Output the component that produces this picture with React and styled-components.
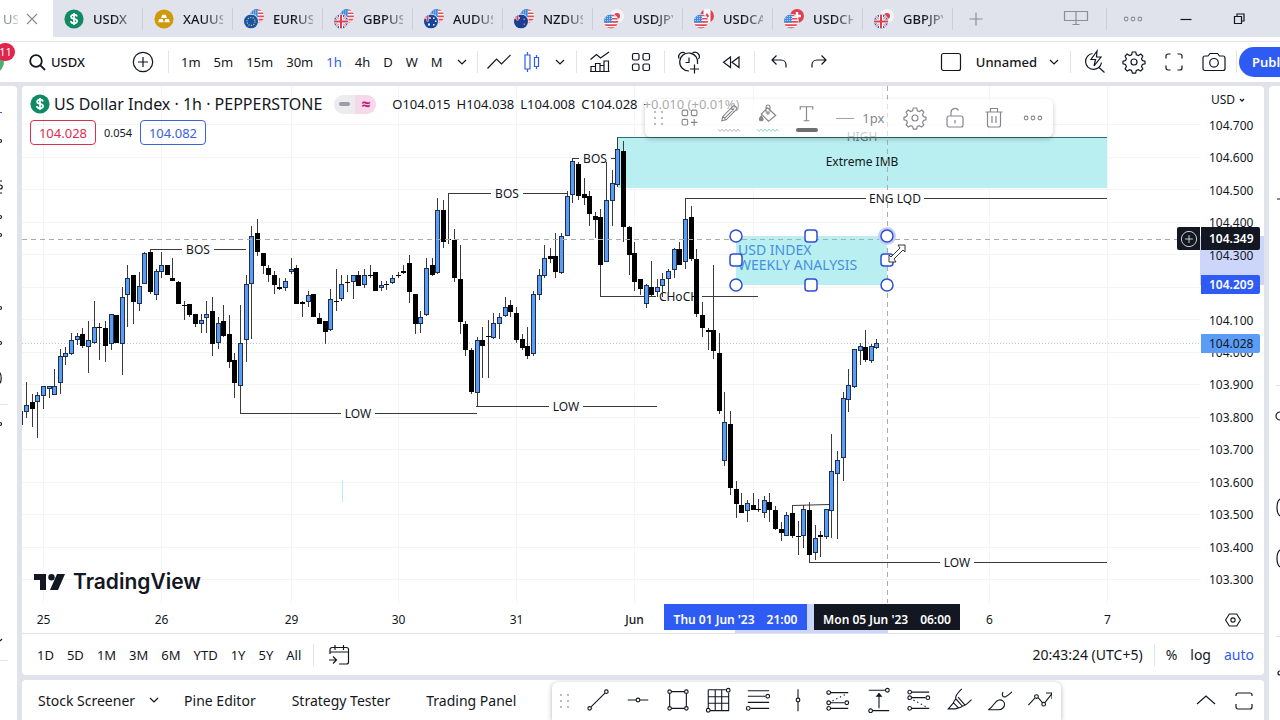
import React from 'react';
import styled, { createGlobalStyle, css } from 'styled-components';

const COLORS = {
  frame: '#e0e3eb',
  panel: '#ffffff',
  text: '#131722',
  muted: '#8b8e96',
  line: '#e0e3eb',
  grid: '#f3f4f6',
  blue: '#2f5bf5',
  up: '#5b9cf6',
  zone: '#b9eff0',
  sell: '#d9304f',
};

const FONT = '"Noto Sans", "Open Sans", sans-serif';

const GlobalStyle = createGlobalStyle`
  * { box-sizing: border-box; }
  body {
    margin: 0;
    background: ${COLORS.frame};
    color: ${COLORS.text};
    font-family: ${FONT};
    font-size: 13px;
    overflow: hidden;
  }
  button {
    border: 0;
    padding: 0;
    background: none;
    color: inherit;
    font: inherit;
    cursor: pointer;
  }
`;

// ============================================================
// FRAME
// ============================================================

const Page = styled.div`
  display: flex;
  flex-direction: column;
  height: 100vh;
`;

const Body = styled.div`
  display: flex;
  flex: 1;
  min-height: 0;
  gap: 5px;
  margin-top: 4px;
`;

const SideBar = styled.aside`
  flex: none;
  width: ${({ $width }) => $width}px;
  background: ${COLORS.panel};
  border-radius: ${({ $right }) => ($right ? '4px 0 0 0' : '0 4px 0 0')};
  overflow: hidden;

  svg { display: block; }
`;

const Center = styled.main`
  display: flex;
  flex-direction: column;
  flex: 1;
  min-width: 0;
  gap: 5px;
`;

const Divider = styled.span`
  flex: none;
  width: 1px;
  height: 22px;
  margin: 0 ${({ $gap }) => $gap || 0}px;
  background: ${({ $dark }) => ($dark ? '#cbced8' : COLORS.line)};
`;

const Spacer = styled.span`
  flex: 1;
`;

// ============================================================
// ICONS
// ============================================================

const IconSvg = styled.svg`
  display: block;
  flex: none;
  fill: none;
  stroke: currentColor;
  stroke-width: ${({ $weight }) => $weight || 1.2}px;
`;

const ICONS = {
  close: <path d="M9 9l10 10M19 9L9 19" />,
  plus: <path d="M14 7.5v13M7.5 14h13" />,
  search: <><circle cx="13" cy="13" r="5.8" /><path d="M17.2 17.2l4.800 4.800" /></>,
  addCircle: <><circle cx="14" cy="14" r="9.7" /><path d="M14 9v10M9 14h10" /></>,
  chevron: <path d="M10 12l4 4 4-4" />,
  chevronUp: <path d="M5 18l9-8 9 8" />,
  lineChart: <path d="M2.5 20.5l9-9.5 5 5 9-9" />,
  candles: <><path d="M9.5 7V4M9.5 24v-3M18.5 9V7M18.5 21v-2" /><path d="M7 7h5v14H7zM16.5 9.5h4v9h-4z" /></>,
  indicators: (
    <>
      <path d="M4.5 11.5l6-5 4 3.5 8.5-6" />
      <path d="M5 23.5v-5h4.5v5zM9.5 23.5v-8H14v8zM14 23.5v-6h4v6M18 23.5v-10.5h4.5v10.5zM4 23.5h19.5" />
    </>
  ),
  templates: (
    <>
      <rect x="5.5" y="5.5" width="6.5" height="6.5" rx="1.5" />
      <rect x="16" y="5.5" width="6.5" height="6.5" rx="1.5" />
      <rect x="5.5" y="16" width="6.5" height="6.5" rx="1.5" />
      <rect x="16" y="16" width="6.5" height="6.5" rx="1.5" />
    </>
  ),
  templatesAdd: (
    <>
      <rect x="5.5" y="5.5" width="6" height="6" rx="1.5" />
      <rect x="15.5" y="5.5" width="6" height="6" rx="1.5" />
      <rect x="5.5" y="15.5" width="6" height="6" rx="1.5" />
      <path d="M18.5 15v7.5M15 18.7h7" />
    </>
  ),
  alarm: (
    <>
      <path d="M14 23a9 9 0 1 1 8.5-7" />
      <path d="M14 9.500v5h-3.500M4 10.500a4.300 4.300 0 0 1 6-5.500M23.500 11a4.300 4.300 0 0 0-6-6M19.500 16.500v9M15 21h9" />
    </>
  ),
  rewind: <path d="M13.5 9v10.500l-7-5.200zM22 9v10.500l-7-5.200z" />,
  undo: <path d="M11.5 7.5L7 12l4.5 4.5M7.5 12H16c2.800 0 5 2.200 5 5v2.5" />,
  redo: <path d="M16.5 7.5L21 12l-4.500 4.500M20.5 12H12c-2.800 0-5 2.200-5 5v2.5" />,
  layout: <rect x="4.5" y="5.5" width="19" height="17" rx="2" />,
  quickSearch: (
    <>
      <path d="M12.5 5.5a8 8 0 1 0 9 9M18.5 19l6 5.5" />
      <path d="M17 3l-6 8.5h4.500L14 18l7-9h-4.500z" />
    </>
  ),
  gear: (
    <>
      <circle cx="14" cy="14" r="3" />
      <path d="M12.3 4h3.4l.7 2.7 2 .8L20.8 6l2 2.2-1.3 2.5.9 1.9 2.6.7v2.4l-2.6.8-.9 2 1.3 2.4-2.1 2.1-2.400-1.300-2 .8-.7 2.600h-3.200l-.8-2.600-2-.8L7.2 23l-2.100-2.100 1.300-2.400-.9-2-2.500-.8v-2.400l2.500-.7.9-1.900-1.300-2.500 2-2.200 2.500 1.500 2-.8z" />
    </>
  ),
  fullscreen: <path d="M6 10.5V8c0-1.100.9-2 2-2h2.500M17.5 6H20c1.100 0 2 .9 2 2v2.5M22 17.5V20c0 1.100-.9 2-2 2h-2.500M10.5 22H8c-1.100 0-2-.9-2-2v-2.500" />,
  maximize: <path d="M6 10V9c0-1.100.9-2 2-2h12c1.100 0 2 .9 2 2v1M22 18v3c0 1.100-.9 2-2 2H8c-1.100 0-2-.9-2-2v-3" />,
  camera: (
    <>
      <path d="M10 5.5h7.500l2 2.500H23c1.100 0 2 .9 2 2v10.500c0 1.100-.9 2-2 2H5c-1.100 0-2-.9-2-2V10c0-1.100.9-2 2-2h3z" />
      <circle cx="14" cy="14.8" r="4.3" />
    </>
  ),
  panels: <path d="M2.5 6.5h23v9h-23zM14 6.5v13M10.5 19.5h7" />,
  more: <><circle cx="6" cy="14" r="2.2" /><circle cx="14" cy="14" r="2.2" /><circle cx="22" cy="14" r="2.2" /></>,
  minimize: <path d="M8.5 14.5h11" />,
  restore: <path d="M9.5 11.5h7v7h-7zM12 11.5V9h7v7h-2.500" />,
  pencil: <path d="M6 20.5l1-4.5L17.5 5.500c.7-.7 1.800-.7 2.500 0l1 1c.7.7.7 1.800 0 2.500L10.500 19.500zM7 16l3.500 3.500M15.500 7.500L19 11M8.800 18L18.500 8.500" />,
  bucket: (
    <>
      <path d="M13 7l8.500 8-7.500 6-7.500-7.500zM11.5 12V6c0-2.500 4-2.500 4 0v5" />
      <circle cx="13.5" cy="12.5" r="1.2" />
      <path d="M6.5 15.5c-3 3.500-2 5 0 5s3-1.500 0-5z" fill="currentColor" />
    </>
  ),
  textTool: <path d="M7.5 9V6h13v3M14 6v14.500M11 20.500h6" />,
  lock: <><rect x="6" y="12" width="16" height="11" rx="2" /><path d="M10 12V8.500a4 4 0 0 1 7.500-2M14 16v3.500" /></>,
  trash: <path d="M5.5 8h17M10.5 8V4.500h7V8M7.500 8v13c0 1 .8 2 2 2h9c1.200 0 2-1 2-2V8M12 12v7M16 12v7" />,
  goTo: <path d="M5 13V8.500c0-1.100.9-2 2-2h14.500c1.100 0 2 .9 2 2V21c0 1.100-.9 2-2 2H14M5 11h18.500M10 4v5M18.500 4v5M4 19h7M8 15.500l3.500 3.500L8 22.500" />,
  hexagon: <><path d="M10 7.5h8l4 6.500-4 6.500h-8L6 14z" /><circle cx="14" cy="14" r="2.3" /></>,
  trendLine: <><path d="M6.5 21.5L21.5 6.5" /><circle cx="5" cy="23" r="1.9" /><circle cx="23" cy="5" r="1.9" /></>,
  horizontalLine: <><path d="M3 14h9M16 14h9" /><circle cx="14" cy="14" r="2" /></>,
  rectangle: (
    <>
      <path d="M7 5h14M7 23h14M5 7v14M23 7v14" />
      <circle cx="5" cy="5" r="1.9" /><circle cx="23" cy="5" r="1.9" />
      <circle cx="5" cy="23" r="1.9" /><circle cx="23" cy="23" r="1.9" />
    </>
  ),
  fibGrid: (
    <>
      <path d="M3.5 3h19M3.5 3v20M5.5 25.500h20v-19M3.5 10.500h22M3.5 17.500h22M11 3v22.500M18 3v22.500" />
      <circle cx="25" cy="3.5" r="2" /><circle cx="3.5" cy="25" r="2" />
    </>
  ),
  fib: <><path d="M3 4h23M3 10h19M3 16.5h23M6 23h20" /><circle cx="24.5" cy="10" r="2" /><circle cx="3.5" cy="23" r="2" /></>,
  verticalLine: <><path d="M14 2.5v9.500M14 16v10" /><circle cx="14" cy="14" r="2" /></>,
  longPosition: (
    <>
      <path d="M6 6h19M6 17h15M6 23h19" /><path d="M8 15L24 7" strokeDasharray="1.5 3" />
      <circle cx="4" cy="6" r="2" /><circle cx="4" cy="17" r="2" /><circle cx="4" cy="23" r="2" /><circle cx="23.5" cy="17" r="2" />
    </>
  ),
  priceRange: <><path d="M3 3.5h18M7 25.5h18M14 23V7" /><path d="M11.500 10L14 7l2.500 3z" fill="currentColor" /><circle cx="23" cy="3.5" r="2" /><circle cx="5" cy="25.5" r="2" /></>,
  shortPosition: (
    <>
      <path d="M6 5.5h19M6 11.5h15M6 23h19" /><path d="M8 14l15 8" strokeDasharray="1.5 3" />
      <circle cx="4" cy="5.5" r="2" /><circle cx="4" cy="11.5" r="2" /><circle cx="4" cy="23" r="2" /><circle cx="23.5" cy="11.5" r="2" />
    </>
  ),
  highlighter: <path d="M17 2c-4 4-7.500 7-6.500 10.500l7 8c3.500 0 6.500-3.500 10-7M11 12.500c-1.500 2-3 3-3 4.500l5.500 5.500c2 0 3-1 4.500-2M13 11l7.500 8.500M8 17l-5.500 6.500H10l3.500-1" />,
  brush: <path d="M2.5 24.500h11c4 0 6.500-3 6.500-6s-3-5-6-4.500c-5 .8-5 7-11.500 10.500zM18.500 5.500c-2 2.500-.5 6 2.500 5 2.500-.8 5-3.500 8-6" />,
  path: <><path d="M2.5 19.5l7-7.500M13 11.5l4.500 5M20.5 16.5L28 7M21.5 6.5h6.500v6.500" /><circle cx="11.3" cy="10.3" r="2" /><circle cx="19" cy="18.5" r="2" /></>,
};

const Icon = ({ name, size = 28, weight }) => (
  <IconSvg $weight={weight} width={size} height={size} viewBox="0 0 28 28" aria-hidden="true">
    {ICONS[name]}
  </IconSvg>
);

const Grip = () => (
  <svg width="10" height="14" viewBox="0 0 10 14" fill="#b9bbc1" aria-hidden="true">
    {[1, 7, 13].map((y) => (
      <React.Fragment key={y}>
        <rect x="0" y={y - 1} width="2" height="2" />
        <rect x="7" y={y - 1} width="2" height="2" />
      </React.Fragment>
    ))}
  </svg>
);

const IconButton = styled.button`
  display: flex;
  flex: none;
  align-items: center;
  justify-content: center;
  width: ${({ $width }) => $width || 40}px;
  height: 34px;
  color: ${({ $tone }) => $tone || 'inherit'};
`;

// ============================================================
// FLAGS
// ============================================================

const FLAGS = {
  us: (
    <>
      <path fill="#fff" d="M0 0h14v14H0z" />
      <path stroke="#e04b57" strokeWidth="1.6" d="M0 1h14M0 4.2h14M0 7.4h14M0 10.6h14M0 13.5h14" />
      <path fill="#3f8be0" d="M0 0h8v8H0z" />
      <path stroke="#bcdcf7" strokeWidth=".8" strokeDasharray="1 1" d="M1 2h7M1 4h7M1 6h7" />
    </>
  ),
  eu: (
    <>
      <path fill="#1656a8" d="M0 0h14v14H0z" />
      <circle cx="7" cy="7" r="4" fill="none" stroke="#d9c34a" strokeWidth="1.2" strokeDasharray="1.2 1.3" />
    </>
  ),
  gb: (
    <>
      <path fill="#3a58ae" d="M0 0h14v14H0z" />
      <path stroke="#fff" strokeWidth="2.6" d="M0 0l14 14M14 0L0 14" />
      <path stroke="#e04b57" strokeWidth="1" d="M0 0l14 14M14 0L0 14" />
      <path stroke="#fff" strokeWidth="4" d="M7 0v14M0 7h14" />
      <path stroke="#e0404e" strokeWidth="2" d="M7 0v14M0 7h14" />
    </>
  ),
  au: (
    <>
      <path fill="#17449c" d="M0 0h14v14H0z" />
      <path stroke="#fff" strokeWidth="2" d="M3.5 0v7M0 3.5h7" />
      <path stroke="#e0404e" strokeWidth="1" d="M3.5 0v7M0 3.5h7" />
      <path fill="#fff" d="M9 3h1.500v1.500H9zM11 6h1.500v1.500H11zM9 9.500h1.500V11H9zM4 9h2v2H4z" />
    </>
  ),
  nz: (
    <>
      <path fill="#1b3f94" d="M0 0h14v14H0z" />
      <path stroke="#fff" strokeWidth="2" d="M3.5 0v6M0 3.5h6" />
      <path stroke="#e0404e" strokeWidth="1" d="M3.5 0v6M0 3.5h6" />
      <path fill="#e56c78" d="M9.5 4H11v1.500H9.500zM9.500 9H11v1.500H9.500z" />
    </>
  ),
  jp: <><path fill="#f4f4f7" d="M0 0h14v14H0z" /><circle cx="7" cy="7" r="3" fill="#e0404e" /></>,
  ca: <><path fill="#fff" d="M0 0h14v14H0z" /><path fill="#e0404e" d="M0 0h3.500v14H0zM10.500 0H14v14h-3.500zM7 4l2 3-2 3-2-3z" /></>,
  ch: <><path fill="#e0404e" d="M0 0h14v14H0z" /><path stroke="#fff" strokeWidth="2.4" d="M7 3v8M3 7h8" /></>,
};

const PairIcon = ({ id, front, back }) => (
  <svg width="20" height="20" viewBox="0 0 20 20" aria-hidden="true">
    <clipPath id={`${id}-flag`}><circle cx="7" cy="7" r="7" /></clipPath>
    <g transform="translate(6 0)"><g clipPath={`url(#${id}-flag)`}>{FLAGS[back]}</g></g>
    <circle cx="7" cy="12.5" r="7.8" fill={COLORS.frame} />
    <g transform="translate(0 5.5)"><g clipPath={`url(#${id}-flag)`}>{FLAGS[front]}</g></g>
  </svg>
);

const DollarIcon = () => (
  <svg width="20" height="20" viewBox="0 0 20 20" aria-hidden="true">
    <circle cx="10" cy="10" r="9.6" fill="#0f8a62" />
    <path
      d="M13 7.500c-.3-1.200-1.500-1.800-3-1.800-1.700 0-2.900.8-2.900 2.100 0 3 6 1.400 6 4.300 0 1.400-1.300 2.200-3.100 2.200-1.700 0-3-.7-3.200-2.100M10 4v12"
      fill="none"
      stroke="#fff"
      strokeWidth="1.8"
    />
  </svg>
);

const GoldIcon = () => (
  <svg width="20" height="20" viewBox="0 0 20 20" aria-hidden="true">
    <circle cx="10" cy="10" r="9.6" fill="#cf9a0a" />
    <path fill="#fff" d="M8.200 5.800h3.600l1 3.200H7.200zM5.200 10h3.600l.8 3.200H4.200zM11.200 10h3.600l1 3.200h-5.400z" />
  </svg>
);

// ============================================================
// TAB STRIP
// ============================================================

const TabStrip = styled.nav`
  display: flex;
  flex: none;
  align-items: center;
  height: 37px;
  padding-right: 15px;
`;

const ActiveTab = styled.div`
  display: flex;
  flex: none;
  align-items: center;
  width: 53px;
  height: 37px;
  padding-left: 3px;
  background: ${COLORS.panel};
  color: ${COLORS.muted};
`;

const FadeText = styled.span`
  flex: none;
  width: ${({ $width }) => $width}px;
  overflow: hidden;
  white-space: nowrap;
  mask-image: linear-gradient(90deg, #000 50%, rgba(0, 0, 0, 0.3) 100%);
`;

const SymbolTab = styled.button`
  display: flex;
  flex: none;
  align-items: center;
  gap: 9px;
  width: 90px;
  height: 22px;
  padding-left: 11px;
  border-right: 1px solid #cbced8;
  font-weight: 500;
  text-align: left;
`;

const TABS = [
  { name: 'USDX', icon: <DollarIcon /> },
  { name: 'XAUUSD', icon: <GoldIcon /> },
  { name: 'EURUSD', front: 'eu', back: 'us' },
  { name: 'GBPUSD', front: 'gb', back: 'us' },
  { name: 'AUDUSD', front: 'au', back: 'us' },
  { name: 'NZDUSD', front: 'nz', back: 'us' },
  { name: 'USDJPY', front: 'us', back: 'jp' },
  { name: 'USDCAD', front: 'us', back: 'ca' },
  { name: 'USDCHF', front: 'us', back: 'ch' },
  { name: 'GBPJPY', front: 'gb', back: 'jp' },
];

const Tabs = () => (
  <TabStrip>
    <ActiveTab>
      <FadeText $width={15}>US</FadeText>
      <IconButton $width={28} aria-label="Close tab"><Icon name="close" /></IconButton>
    </ActiveTab>
    {TABS.map((tab) => (
      <SymbolTab key={tab.name}>
        {tab.icon || <PairIcon id={tab.name} front={tab.front} back={tab.back} />}
        <FadeText $width={40}>{tab.name}</FadeText>
      </SymbolTab>
    ))}
    <IconButton $width={46} $tone={COLORS.muted} aria-label="New tab"><Icon name="plus" /></IconButton>
    <Spacer />
    <IconButton $width={60} $tone={COLORS.muted} aria-label="Panels"><Icon name="panels" /></IconButton>
    <Divider $dark />
    <IconButton $width={52} $tone={COLORS.muted} aria-label="Menu"><Icon name="more" size={24} /></IconButton>
    <IconButton $width={54} aria-label="Minimize"><Icon name="minimize" /></IconButton>
    <IconButton $width={52} aria-label="Restore"><Icon name="restore" /></IconButton>
  </TabStrip>
);

// ============================================================
// TOP TOOLBAR
// ============================================================

const ToolStrip = styled.div`
  flex: none;
  height: 5px;
  background: ${COLORS.panel};
  border-bottom: 1px solid ${COLORS.line};
`;

const Toolbar = styled.header`
  display: flex;
  flex: none;
  align-items: center;
  height: 40px;
  background: ${COLORS.panel};
`;

const Account = styled.div`
  position: relative;
  flex: none;
  width: 23px;
  height: 40px;

  &:before {
    content: '';
    position: absolute;
    left: -24px;
    top: 5px;
    width: 28px;
    height: 28px;
    border-radius: 50%;
    background: #4caf6e;
  }
`;

const Badge = styled.span`
  position: absolute;
  left: -4px;
  top: 1px;
  width: 19px;
  height: 18px;
  border-radius: 9px;
  background: #e0244c;
  color: #fff;
  font-size: 11px;
  line-height: 18px;
  text-align: center;
`;

const SymbolSearch = styled.button`
  display: flex;
  align-items: center;
  width: 100px;
  height: 34px;
  font-weight: 500;
`;

const TextRow = styled.div`
  display: flex;
  align-items: center;
  gap: ${({ $gap }) => $gap}px;
  margin: 0 ${({ $after }) => $after || 0}px 0 ${({ $before }) => $before || 0}px;
`;

const TextButton = styled.button`
  flex: none;
  height: 28px;
  white-space: nowrap;
  ${({ $active }) => $active && css`color: ${COLORS.blue};`}
  ${({ $medium }) => $medium && css`font-weight: 500;`}
  ${({ $large }) => $large && css`font-size: 14px;`}
`;

const PublishButton = styled.button`
  flex: none;
  width: 41px;
  height: 30px;
  padding-left: 13px;
  border-radius: 15px 0 0 15px;
  background: ${COLORS.blue};
  color: #fff;
  font-weight: 600;
  text-align: left;
  white-space: nowrap;
  overflow: hidden;
`;

const INTERVALS = ['1m', '5m', '15m', '30m', '1h', '4h', 'D', 'W', 'M'];

const TopToolbar = () => (
  <Toolbar>
    <Account><Badge>11</Badge></Account>
    <SymbolSearch><Icon name="search" weight={1.8} />USDX</SymbolSearch>
    <IconButton aria-label="Compare symbol"><Icon name="addCircle" /></IconButton>
    <Divider $gap={5} />
    <TextRow $gap={13} $before={7} $after={6}>
      {INTERVALS.map((item) => (
        <TextButton key={item} $active={item === '1h'}>{item}</TextButton>
      ))}
    </TextRow>
    <IconButton $width={26} aria-label="More intervals"><Icon name="chevron" /></IconButton>
    <Divider $gap={2} />
    <IconButton $width={38} aria-label="Line"><Icon name="lineChart" /></IconButton>
    <IconButton $width={28} $tone={COLORS.blue} aria-label="Candles"><Icon name="candles" /></IconButton>
    <IconButton $width={28} aria-label="More styles"><Icon name="chevron" /></IconButton>
    <Divider $gap={2} />
    <IconButton $width={42} aria-label="Indicators"><Icon name="indicators" /></IconButton>
    <IconButton $width={40} aria-label="Templates"><Icon name="templates" /></IconButton>
    <Divider $gap={3} />
    <IconButton $width={42} aria-label="Alert"><Icon name="alarm" /></IconButton>
    <IconButton $width={42} aria-label="Replay"><Icon name="rewind" /></IconButton>
    <Divider $gap={2} />
    <IconButton $width={44} aria-label="Undo"><Icon name="undo" /></IconButton>
    <IconButton $width={36} aria-label="Redo"><Icon name="redo" /></IconButton>
    <Spacer />
    <IconButton aria-label="Layout"><Icon name="layout" /></IconButton>
    <TextRow $gap={4} $before={5}>
      <TextButton $medium>Unnamed</TextButton>
      <IconButton $width={26} aria-label="Layouts"><Icon name="chevron" /></IconButton>
    </TextRow>
    <Divider $gap={3} />
    <IconButton aria-label="Quick search"><Icon name="quickSearch" /></IconButton>
    <IconButton aria-label="Settings"><Icon name="gear" /></IconButton>
    <IconButton aria-label="Fullscreen"><Icon name="fullscreen" /></IconButton>
    <IconButton aria-label="Snapshot"><Icon name="camera" /></IconButton>
    <Divider $gap={2} />
    <PublishButton>Publish</PublishButton>
  </Toolbar>
);

// ============================================================
// CHART DATA
// ============================================================

// [high, body top, body bottom, low, kind] with kind 1 = up, 0 = down
const BARS = [
  [411, 411, 425, 425, 1], [382, 405, 412, 418, 1], [394, 402, 409, 427, 0], [392, 395, 402, 438, 1],
  [386, 386, 396, 409, 1], [386, 386, 389, 398, 1], [369, 386, 395, 395, 1], [349, 356, 383, 394, 1],
  [347, 353, 357, 365, 1], [333, 340, 354, 355, 1], [333, 336, 340, 345, 1], [328, 334, 346, 348, 0],
  [321, 340, 347, 373, 1], [301, 327, 343, 344, 1], [323, 327, 328, 360, 0], [321, 328, 346, 362, 0],
  [314, 314, 344, 350, 1], [315, 315, 343, 343, 0], [287, 297, 344, 375, 1], [265, 278, 295, 327, 1],
  [275, 275, 302, 324, 0], [272, 286, 304, 311, 1], [252, 253, 284, 284, 1], [250, 252, 292, 294, 0],
  [269, 271, 295, 300, 1], [252, 265, 272, 278, 1], [265, 265, 275, 275, 0], [258, 278, 281, 281, 0],
  [281, 282, 304, 304, 0], [301, 305, 306, 320, 0], [304, 304, 315, 317, 0], [314, 314, 324, 327, 0],
  [314, 320, 324, 333, 1], [301, 314, 318, 333, 1], [297, 311, 344, 356, 0], [317, 323, 343, 349, 1],
  [305, 321, 336, 337, 0], [315, 334, 362, 368, 0], [353, 360, 383, 398, 0], [305, 343, 386, 414, 1],
  [275, 284, 340, 362, 1], [226, 236, 284, 339, 1], [219, 233, 252, 256, 0], [253, 253, 266, 274, 0],
  [265, 268, 275, 282, 0], [271, 275, 285, 294, 0], [278, 287, 289, 290, 0], [278, 281, 288, 291, 1],
  [258, 269, 272, 274, 1], [265, 268, 304, 304, 0], [301, 302, 304, 317, 0], [291, 295, 302, 307, 1],
  [294, 294, 317, 317, 0], [313, 318, 324, 324, 0], [321, 321, 332, 344, 0], [289, 299, 330, 331, 1],
  [269, 301, 302, 311, 0], [275, 284, 299, 301, 1], [275, 282, 283, 292, 0], [275, 275, 282, 299, 1],
  [271, 275, 286, 286, 0], [269, 275, 285, 288, 1], [265, 275, 276, 278, 0], [272, 272, 291, 291, 0],
  [281, 285, 288, 291, 1], [281, 284, 285, 290, 0], [275, 278, 283, 284, 1], [272, 275, 276, 278, 0],
  [265, 271, 273, 274, 0], [255, 263, 292, 303, 0], [294, 294, 324, 334, 0], [311, 317, 324, 333, 1],
  [258, 268, 315, 316, 1], [258, 265, 275, 276, 0], [198, 210, 273, 274, 1], [200, 210, 242, 248, 0],
  [193, 239, 240, 244, 0], [229, 240, 278, 282, 0], [245, 279, 322, 334, 0], [321, 324, 350, 356, 0],
  [348, 350, 392, 394, 0], [337, 340, 393, 407, 1], [327, 340, 346, 378, 0], [320, 336, 337, 378, 0],
  [313, 323, 338, 339, 1], [313, 317, 324, 339, 1], [297, 307, 316, 317, 1], [300, 305, 312, 317, 0],
  [307, 313, 340, 343, 0], [334, 339, 348, 350, 0], [327, 346, 356, 359, 0], [291, 294, 354, 356, 1],
  [269, 275, 295, 300, 1], [245, 258, 276, 278, 1], [248, 256, 259, 263, 0], [233, 256, 272, 278, 0],
  [233, 236, 273, 274, 1], [191, 196, 236, 236, 1], [158, 161, 195, 203, 1], [162, 164, 196, 200, 0],
  [178, 194, 198, 205, 0], [191, 196, 214, 226, 0], [212, 216, 220, 238, 0], [209, 217, 265, 296, 0],
  [162, 200, 262, 262, 1], [170, 183, 201, 226, 1], [138, 149, 185, 187, 1], [141, 151, 227, 242, 0],
  [226, 227, 255, 275, 0], [242, 253, 282, 291, 0], [279, 279, 289, 295, 0], [284, 285, 304, 308, 1],
  [261, 287, 295, 297, 0], [279, 287, 292, 297, 1], [273, 279, 286, 297, 1], [269, 271, 279, 293, 1],
  [248, 249, 270, 278, 1], [242, 249, 265, 265, 0], [198, 219, 262, 269, 1], [206, 217, 259, 261, 0],
  [249, 259, 314, 317, 0], [302, 315, 328, 337, 0], [328, 330, 332, 350, 0], [265, 330, 351, 359, 0],
  [333, 353, 411, 414, 0], [392, 422, 461, 466, 1], [411, 424, 488, 495, 0], [481, 489, 504, 518, 0],
  [493, 505, 513, 513, 0], [500, 503, 511, 522, 1], [493, 505, 510, 510, 0], [499, 509, 510, 512, 0],
  [496, 500, 513, 518, 1], [493, 502, 510, 522, 0], [506, 510, 529, 530, 0], [522, 529, 533, 541, 0],
  [512, 515, 536, 536, 1], [505, 513, 536, 538, 0], [521, 536, 537, 555, 0], [505, 509, 536, 548, 1],
  [502, 510, 555, 562, 0], [525, 538, 553, 560, 1], [531, 535, 537, 557, 0], [509, 509, 537, 539, 1],
  [434, 471, 511, 538, 1], [451, 460, 474, 539, 1], [392, 398, 458, 481, 1], [369, 385, 400, 412, 1],
  [349, 349, 387, 388, 1], [343, 346, 351, 365, 1], [330, 347, 360, 362, 0], [344, 346, 361, 363, 1],
  [339, 343, 348, 349, 1],
];

const barX = (index) => Math.floor(20.9 + index * 5.632) + 0.5;

const DAYS = [
  { bar: 4, label: '25' },
  { bar: 25, label: '26' },
  { bar: 48, label: '29' },
  { bar: 67, label: '30' },
  { bar: 88, label: '31' },
  { bar: 109, label: 'Jun' },
  { bar: 130 },
  { bar: 153 },
  { bar: 172, label: '6' },
  { bar: 193, label: '7' },
];

const PRICES = Array.from({ length: 15 }, (_, i) => (104.7 - i * 0.1).toFixed(3));
const priceY = (index) => Math.round(125 + index * 32.5) - 0.5;

const LEVELS = [
  { label: 'BOS', y: 249.5, from: 150, to: 246, at: 198, gap: 16 },
  { label: 'LOW', y: 413.5, from: 240, to: 477, at: 358, gap: 17 },
  { label: 'BOS', y: 193.5, from: 448, to: 568, at: 507, gap: 16 },
  { label: 'LOW', y: 406.5, from: 476, to: 657, at: 566, gap: 17 },
  { label: 'BOS', y: 158.5, from: 572, to: 616, at: 595, gap: 16 },
  { label: 'CHoCH', y: 296.5, from: 600, to: 758, at: 679, gap: 23 },
  { label: 'ENG LQD', y: 198.5, from: 685, to: 1107, at: 895, gap: 29 },
  { label: 'LOW', y: 562.5, from: 809, to: 1107, at: 957, gap: 17 },
];

// ============================================================
// CHART PANE
// ============================================================

const ChartPanel = styled.section`
  display: flex;
  flex-direction: column;
  flex: 1;
  min-height: 0;
  background: ${COLORS.panel};
  border-radius: 4px;
  overflow: hidden;
`;

const PaneRow = styled.div`
  display: flex;
  flex: 1;
  min-height: 0;
`;

const Pane = styled.div`
  position: relative;
  flex: 1;
  min-width: 0;
`;

const Plot = styled.svg`
  display: block;
  width: 100%;
  height: 100%;
  font-family: ${FONT};
  font-size: 12px;
`;

const Candle = ({ bar, index }) => {
  const [high, top, bottom, low, up] = bar;
  const x = barX(index);
  return (
    <g>
      <path d={`M${x} ${high}V${low}`} stroke="#3a3a3a" />
      {up ? (
        <rect x={x - 2} y={top + 0.5} width="4" height={bottom - top - 1} fill={COLORS.up} stroke="#1d2f4c" />
      ) : (
        <rect x={x - 2.5} y={top} width="5" height={bottom - top} fill="#000" />
      )}
    </g>
  );
};

const Level = ({ level }) => (
  <g>
    <path
      d={`M${level.from} ${level.y}H${level.at - level.gap}M${level.at + level.gap} ${level.y}H${level.to}`}
      stroke="#3a3a3a"
    />
    <text x={level.at} y={level.y + 4} textAnchor="middle" fill={COLORS.text}>{level.label}</text>
  </g>
);

const Handle = ({ x, y, round }) => (
  <rect x={x - 6} y={y - 6} width="12" height="12" rx={round ? 6 : 3} fill="#fff" stroke="#2d4fd0" strokeWidth="1.5" />
);

const ChartPlot = () => (
  <Plot role="img" aria-label="US Dollar Index hourly candles">
    <g transform="translate(-22 -86)">
      <g stroke={COLORS.grid}>
        {PRICES.map((price, i) => <path key={price} d={`M22 ${priceY(i)}H2400`} />)}
        {DAYS.map(({ bar }) => <path key={bar} d={`M${barX(bar)} 86V1200`} />)}
      </g>
      <path d="M342.500 480v22" stroke={COLORS.zone} />
      <rect x="618" y="138" width="489" height="50" fill={COLORS.zone} />
      <path d="M617 137.500H1107" stroke="#2d6f74" />
      <text x="862" y="141" textAnchor="middle" fill="#6f7a7d">HIGH</text>
      <text x="862" y="166" textAnchor="middle" fill={COLORS.text}>Extreme IMB</text>
      <path d="M22 343.500H2400" stroke="#a9c8ee" strokeDasharray="1 2" />
      {LEVELS.map((level) => <Level key={`${level.label}${level.y}`} level={level} />)}
      <path d="M448.500 193V240M792.500 512V505.500L829 504.500" stroke="#3a3a3a" fill="none" />
      {BARS.map((bar, i) => <Candle key={i} bar={bar} index={i} />)}
      <rect x="736" y="236" width="151" height="49" fill={COLORS.zone} />
      <g fill="#4690e0" fontSize="14">
        <text x="738" y="255">USD INDEX</text>
        <text x="738" y="270">WEEKLY ANALYSIS</text>
      </g>
      <g stroke="#a9abb0" strokeDasharray="5 4">
        <path d="M22 239.500H2400" />
        <path d="M887.500 86V1200" />
      </g>
      <circle cx="887" cy="236" r="9" fill="#c5cdf8" />
      {[736, 887].map((x) => [236, 285].map((y) => <Handle key={`${x}${y}`} x={x} y={y} round />))}
      <Handle x={811} y={236} />
      <Handle x={811} y={285} />
      <Handle x={736} y={260} />
      <Handle x={887} y={260} />
      <path
        d="M889 262v-7l2 2 9-9-2-3h7v7l-2-2-9 9 2 3z"
        fill="#fff"
        stroke="#222"
        strokeWidth=".9"
      />
    </g>
  </Plot>
);

const Legend = styled.div`
  position: absolute;
  left: 8px;
  top: 8px;
  display: flex;
  flex-direction: column;
  gap: 6px;
`;

const LegendRow = styled.div`
  display: flex;
  align-items: center;
  height: ${({ $height }) => $height}px;
  white-space: nowrap;
`;

const SymbolTitle = styled.h1`
  margin: 0 12px 0 4px;
  font-size: 16px;
  font-weight: 400;
`;

const StatusPill = styled.span`
  display: flex;
  width: 42px;
  height: 19px;
  margin-right: 16px;
  border-radius: 10px;
  overflow: hidden;
  background: #ececee;
`;

const StatusPart = styled.span`
  display: flex;
  align-items: center;
  justify-content: center;
  width: 21px;
  font-weight: 700;
  ${({ $pink }) => $pink && css`
    background: #f8d9ea;
    color: #c2187a;
    font-size: 16px;
  `}

  i {
    width: 11px;
    height: 4px;
    border-radius: 2px;
    background: #9a9da6;
  }
`;

const Ohlc = styled.span`
  margin-right: 6px;
`;

const QuoteBox = styled.button`
  width: 66px;
  height: 25px;
  border: 1px solid currentColor;
  border-radius: 4px;
  color: ${({ $buy }) => ($buy ? '#3a63d8' : COLORS.sell)};
`;

const Spread = styled.span`
  width: 44px;
  font-size: 11px;
  text-align: center;
`;

const Watermark = styled.div`
  position: absolute;
  left: 12px;
  bottom: 8px;
  display: flex;
  align-items: center;
  gap: 8px;
  font-family: Inter, sans-serif;
  font-size: 21px;
  font-weight: 600;
  line-height: 26px;
`;

const FloatingBar = styled.div`
  position: absolute;
  left: 623px;
  top: 13px;
  display: flex;
  align-items: center;
  width: 408px;
  height: 38px;
  padding-left: 9px;
  border-radius: 6px;
  background: rgba(255, 255, 255, 0.62);
  box-shadow: 0 2px 5px rgba(0, 0, 0, 0.22);
  color: #85878c;

  > svg { margin-right: 6px; }
`;

const SwatchButton = styled.button`
  display: flex;
  flex-direction: column;
  align-items: center;
  width: 39px;
  height: 34px;
`;

const LineWidth = styled.button`
  display: flex;
  align-items: center;
  gap: 8px;
  width: 69px;
  padding-left: 10px;

  &:before {
    content: '';
    width: 18px;
    height: 1px;
    background: #a0a2a6;
  }
`;

const Wave = ({ color }) => (
  <svg width="22" height="5" viewBox="0 0 22 5" fill="none" stroke={color} aria-hidden="true">
    <path d="M0 1l2 2.5 2-2.5 2 2.5 2-2.5 2 2.5 2-2.5 2 2.5 2-2.5 2 2.5 2-2.5 2 2.5" />
  </svg>
);

const DrawingBar = () => (
  <FloatingBar>
    <Grip />
    <IconButton $width={40} aria-label="Template"><Icon name="templatesAdd" size={26} /></IconButton>
    <SwatchButton aria-label="Border colour"><Icon name="pencil" size={27} /><Wave color="#b9bbc0" /></SwatchButton>
    <SwatchButton aria-label="Fill colour"><Icon name="bucket" size={27} /><Wave color="#8fd5d3" /></SwatchButton>
    <SwatchButton aria-label="Text colour">
      <Icon name="textTool" size={27} />
      <svg width="22" height="4" aria-hidden="true"><rect width="22" height="4" rx="2" fill="#6d6f73" /></svg>
    </SwatchButton>
    <LineWidth>1px</LineWidth>
    <IconButton aria-label="Settings"><Icon name="gear" /></IconButton>
    <IconButton $width={39} aria-label="Lock"><Icon name="lock" /></IconButton>
    <IconButton $width={39} aria-label="Remove"><Icon name="trash" /></IconButton>
    <IconButton aria-label="More"><Icon name="more" size={24} /></IconButton>
  </FloatingBar>
);

// ============================================================
// AXES
// ============================================================

const PriceAxis = styled.div`
  position: relative;
  display: flex;
  flex: none;
  flex-direction: column;
  width: 64px;
  padding: 23px 0 7px;
  font-size: 12px;
`;

const PriceLabel = styled.span`
  position: relative;
  display: flex;
  flex: 1;
  align-items: center;
  padding-left: 9px;
`;

const Currency = styled.button`
  position: absolute;
  left: 11px;
  top: 5px;
  display: flex;
  align-items: center;
  font-size: 12px;
  line-height: 18px;
`;

const PriceRangeShade = styled.span`
  position: absolute;
  left: 0;
  right: 0;
  top: 150px;
  height: 49px;
  background: #ccd6fb;
`;

const PriceTag = styled.span`
  position: absolute;
  left: 1px;
  top: ${({ $top }) => $top}px;
  width: 59px;
  height: ${({ $height }) => $height || 19}px;
  padding-left: 8px;
  border-radius: 0 2px 2px 0;
  background: ${({ $color }) => $color};
  color: ${({ $dark }) => ($dark ? COLORS.text : '#fff')};
  font-weight: ${({ $dark }) => ($dark ? 400 : 600)};
  line-height: ${({ $height }) => $height || 19}px;
`;

const AddAtPrice = styled.button`
  position: absolute;
  right: 0;
  top: 141px;
  display: flex;
  align-items: center;
  justify-content: center;
  width: 23px;
  height: 23px;
  border-radius: 2px 0 0 2px;
  background: ${COLORS.text};
  color: #d4d6dc;
`;

const TimeAxis = styled.div`
  position: relative;
  display: flex;
  flex: none;
  height: 31px;
  border-bottom: 1px solid ${COLORS.line};
`;

const TimeLabels = styled.svg`
  flex: 1;
  min-width: 0;
  height: 30px;
  font-family: ${FONT};
  font-size: 12px;
`;

const TimeRangeShade = styled.span`
  position: absolute;
  left: 713px;
  bottom: 0;
  width: 153px;
  height: 29px;
  background: #ccd6fb;
`;

const TimeTag = styled.span`
  position: absolute;
  left: ${({ $left }) => $left}px;
  top: 1px;
  display: flex;
  justify-content: center;
  gap: 12px;
  width: ${({ $width }) => $width}px;
  height: 26px;
  background: ${({ $color }) => $color};
  color: #fff;
  font-size: 12px;
  font-weight: 600;
  line-height: 32px;
  white-space: nowrap;
`;

// ============================================================
// BOTTOM BARS
// ============================================================

const RangeBar = styled.div`
  display: flex;
  flex: none;
  align-items: center;
  height: 41px;
  padding: 0 10px 0 15px;
`;

const BottomPanel = styled.footer`
  position: relative;
  display: flex;
  flex: none;
  align-items: center;
  height: 40px;
  padding: 0 2px 0 16px;
  border-radius: 4px 4px 0 0;
  background: ${COLORS.panel};
  overflow: hidden;
`;

const FavoritesBar = styled.div`
  position: absolute;
  left: 530px;
  top: 2px;
  display: flex;
  align-items: center;
  width: 509px;
  height: 38px;
  padding-left: 8px;
  border-radius: 6px 6px 0 0;
  background: ${COLORS.panel};
  box-shadow: 0 1px 5px rgba(0, 0, 0, 0.3);
`;

const FavoriteTools = styled.div`
  display: flex;
  flex: 1;
  justify-content: space-between;
  padding: 0 2px 2px 8px;
`;

const PanelTab = styled.button`
  display: flex;
  align-items: center;
  margin-right: ${({ $after }) => $after || 36}px;
  font-size: 14px;
  white-space: nowrap;
`;

const RANGES = ['1D', '5D', '1M', '3M', '6M', 'YTD', '1Y', '5Y', 'All'];

const FAVORITES = [
  'trendLine', 'horizontalLine', 'rectangle', 'fibGrid', 'fib', 'verticalLine',
  'longPosition', 'priceRange', 'shortPosition', 'highlighter', 'brush', 'path',
];

const Chart = () => (
  <ChartPanel>
    <PaneRow>
      <Pane>
        <ChartPlot />
        <Legend>
          <LegendRow $height={20}>
            <DollarIcon />
            <SymbolTitle>US Dollar Index · 1h · PEPPERSTONE</SymbolTitle>
            <StatusPill>
              <StatusPart><i /></StatusPart>
              <StatusPart $pink>≈</StatusPart>
            </StatusPill>
            <Ohlc>O104.015</Ohlc>
            <Ohlc>H104.038</Ohlc>
            <Ohlc>L104.008</Ohlc>
            <Ohlc>C104.028</Ohlc>
            <Ohlc>+0.010 (+0.01%)</Ohlc>
          </LegendRow>
          <LegendRow $height={25}>
            <QuoteBox>104.028</QuoteBox>
            <Spread>0.054</Spread>
            <QuoteBox $buy>104.082</QuoteBox>
          </LegendRow>
        </Legend>
        <DrawingBar />
        <Watermark>
          <svg width="31" height="17" viewBox="0 0 31 17" fill={COLORS.text} aria-hidden="true">
            <path d="M0 0h12v16H6V6H0zM23 0h8l-7 16h-8z" />
            <circle cx="17.5" cy="3.2" r="3.2" />
          </svg>
          TradingView
        </Watermark>
        <AddAtPrice aria-label="Add at price"><Icon name="addCircle" size={22} /></AddAtPrice>
      </Pane>
      <PriceAxis>
        <PriceRangeShade />
        <Currency>USD<Icon name="chevron" size={14} weight={2.6} /></Currency>
        {PRICES.map((price) => <PriceLabel key={price}>{price}</PriceLabel>)}
        <PriceTag $top={141} $height={23} $color={COLORS.text}>104.349</PriceTag>
        <PriceTag $top={189} $color={COLORS.blue}>104.209</PriceTag>
        <PriceTag $top={248} $color={COLORS.up} $dark>104.028</PriceTag>
      </PriceAxis>
    </PaneRow>
    <TimeAxis>
      <TimeLabels>
        <g transform="translate(-22 0)" fill={COLORS.text} textAnchor="middle">
          {DAYS.filter((day) => day.label).map((day) => (
            <text key={day.bar} x={barX(day.bar)} y="21" fontWeight={day.label === 'Jun' ? 500 : 400}>
              {day.label}
            </text>
          ))}
        </g>
      </TimeLabels>
      <TimeRangeShade />
      <TimeTag $left={642} $width={143} $color={COLORS.blue}><span>Thu 01 Jun '23</span><span>21:00</span></TimeTag>
      <TimeTag $left={792} $width={146} $color={COLORS.text}><span>Mon 05 Jun '23</span><span>06:00</span></TimeTag>
      <IconButton $width={62} aria-label="Axis settings"><Icon name="hexagon" size={26} /></IconButton>
    </TimeAxis>
    <RangeBar>
      <TextRow $gap={13}>
        {RANGES.map((range) => <TextButton key={range}>{range}</TextButton>)}
      </TextRow>
      <Divider $gap={12} />
      <IconButton $width={26} aria-label="Go to date"><Icon name="goTo" /></IconButton>
      <Spacer />
      <TextButton $large>20:43:24 (UTC+5)</TextButton>
      <Divider $gap={11} />
      <TextRow $gap={13}>
        <TextButton $large>%</TextButton>
        <TextButton $large>log</TextButton>
        <TextButton $large $active>auto</TextButton>
      </TextRow>
    </RangeBar>
  </ChartPanel>
);

const Bottom = () => (
  <BottomPanel>
    <PanelTab $after={5}>Stock Screener</PanelTab>
    <PanelTab $after={16} aria-label="More screeners"><Icon name="chevron" /></PanelTab>
    <PanelTab>Pine Editor</PanelTab>
    <PanelTab>Strategy Tester</PanelTab>
    <PanelTab>Trading Panel</PanelTab>
    <Spacer />
    <IconButton aria-label="Expand"><Icon name="chevronUp" /></IconButton>
    <IconButton $width={36} aria-label="Maximize"><Icon name="maximize" /></IconButton>
    <FavoritesBar>
      <Grip />
      <FavoriteTools>
        {FAVORITES.map((tool) => (
          <IconButton key={tool} aria-label={tool}><Icon name={tool} size={26} /></IconButton>
        ))}
      </FavoriteTools>
    </FavoritesBar>
  </BottomPanel>
);

// Tool rails run past the window edges, so only the icon ends are drawn
const LeftRail = () => (
  <SideBar $width={17}>
    <svg width="17" height="634" fill="none" stroke={COLORS.text} strokeWidth="1.2" aria-hidden="true">
      <path d="M0 26.5h2" stroke={COLORS.blue} />
      <path d="M0 318.5h8M0 574.5h8" stroke={COLORS.line} />
      <path d="M0 95h2M0 99c3 0 3 4 0 4M0 107h2M-1 286c3 2 3 10 0 12" />
      {[55, 131, 149, 222, 257, 338].map((y) => <circle key={y} cx="0" cy={y} r="1.5" />)}
      <path d="M0 555l2-2" />
    </svg>
  </SideBar>
);

const RightRail = () => (
  <SideBar $width={11} $right>
    <svg width="11" height="634" fill="none" stroke={COLORS.text} strokeWidth="1.2" aria-hidden="true">
      <path d="M8 113h3" />
      <path d="M7 299.5h4M7 550.5h4" stroke={COLORS.line} />
      <path d="M11 326a4 4 0 0 0 0 8M11 413c-4 3-4 14 0 17M11 464c-4 3-4 14 0 17M11 585a2 2 0 0 0 0 4" />
    </svg>
  </SideBar>
);

const App = () => (
  <Page>
    <GlobalStyle />
    <Tabs />
    <ToolStrip />
    <TopToolbar />
    <Body>
      <LeftRail />
      <Center>
        <Chart />
        <Bottom />
      </Center>
      <RightRail />
    </Body>
  </Page>
);

export default App;
